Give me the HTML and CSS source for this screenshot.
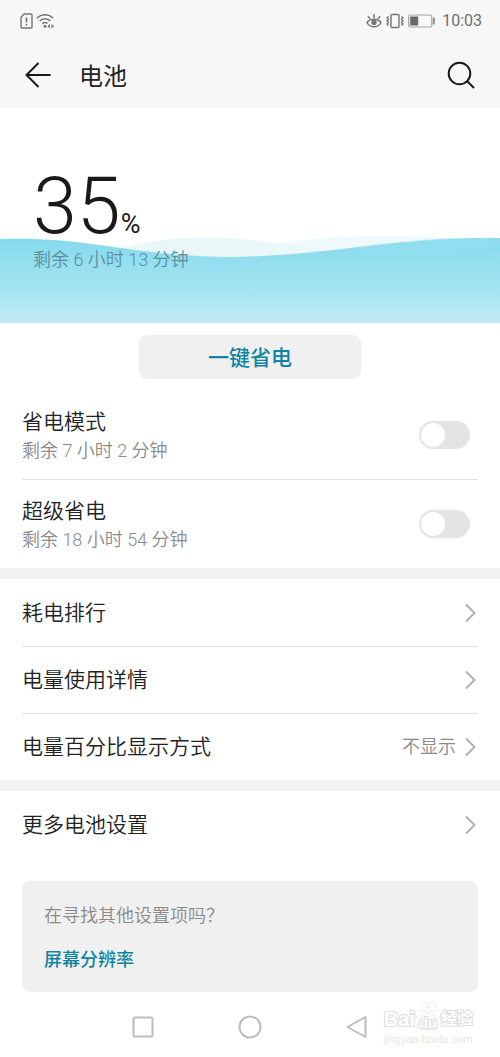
FILE: index.html
```html
<!DOCTYPE html>
<html lang="zh-CN">
<head>
<meta charset="UTF-8">
<meta name="viewport" content="width=device-width, initial-scale=1.0">
<title>电池</title>
<link rel="stylesheet" href="styles.css">
</head>
<body>
<header class="header">
  <div class="status-bar">
    <div class="status-group">
      <svg width="13" height="16" viewBox="0 0 13 16" fill="none" stroke="#757575" stroke-width="1.4">
        <path d="M4.2 1H11a1 1 0 0 1 1 1v12a1 1 0 0 1-1 1H2a1 1 0 0 1-1-1V4.2z"/>
        <path d="M6.5 4.5v4.8M6.5 10.8v1.7" stroke-width="1.6"/>
      </svg>
      <svg width="18" height="16" viewBox="0 0 18 16" fill="none" stroke="#757575" stroke-width="1.5">
        <path d="M1 5.2C5.5.6 12.5.6 17 5.2M3.6 8.1c3-3.1 7.8-3.1 10.8 0M6.2 10.8c1.6-1.5 3.6-1.6 5.4-.3"/>
        <circle cx="9" cy="13.3" r="1.5" fill="#757575" stroke="none"/>
        <path d="M11.5 13.3l2.5-2.2v4.4zM18 13.3l-2.500-2.200v4.400z" fill="#757575" stroke="none"/>
      </svg>
    </div>
    <div class="status-group">
      <svg width="16" height="16" viewBox="0 0 16 16" fill="none" stroke="#757575" stroke-width="1.5">
        <path d="M1 9.5C4 5 12 5 15 9.5C12 15.2 4 15.2 1 9.5z"/>
        <circle cx="8" cy="9.5" r="2.7" fill="#757575" stroke="none"/>
        <path d="M8 1v4M1.8 3.2l2.4 2.5M14.2 3.2l-2.4 2.5"/>
      </svg>
      <svg width="20" height="16" viewBox="0 0 20 16" fill="none" stroke="#757575" stroke-width="1.4">
        <rect x="6" y="1.5" width="8" height="13" rx="1"/>
        <path d="M3.5 3.5l-1.5 1.5 1.5 1.5-1.5 1.5 1.5 1.5-1.5 1.5 1.5 1.5M16.5 3.5l1.5 1.5-1.5 1.5 1.5 1.5-1.5 1.5 1.5 1.5-1.5 1.5"/>
      </svg>
      <svg width="27" height="14" viewBox="0 0 27 14" fill="none">
        <rect x=".7" y="1" width="23" height="12" rx="1.5" stroke="#a6a6a6" stroke-width="1.2"/>
        <rect x="2.2" y="2.5" width="8" height="9" fill="#6a6a6a"/>
        <rect x="24.8" y="3.5" width="2" height="7" fill="#8a8a8a"/>
      </svg>
      <span class="clock">10:03</span>
    </div>
  </div>
  <div class="title-bar">
    <button class="icon-button" type="button" aria-label="返回">
      <svg width="28" height="28" viewBox="0 0 28 28" fill="none" stroke="#1a1a1a" stroke-width="2">
        <path d="M14.5 2L2.5 14l12 12M2.5 14H26.5"/>
      </svg>
    </button>
    <h1>电池</h1>
    <button class="icon-button" type="button" aria-label="搜索">
      <svg width="28" height="28" viewBox="0 0 28 28" fill="none" stroke="#1a1a1a" stroke-width="2">
        <circle cx="12.5" cy="12.5" r="10.8"/>
        <path d="M20 20l7 7"/>
      </svg>
    </button>
  </div>
</header>

<main>
  <section class="hero">
    <svg class="wave" viewBox="0 0 500 88" preserveAspectRatio="none">
      <defs>
        <linearGradient id="water" x1="0" y1="0" x2="0" y2="1">
          <stop offset="0" stop-color="#85d9ed"/>
          <stop offset=".25" stop-color="#92deef"/>
          <stop offset=".65" stop-color="#a7e5f2"/>
          <stop offset="1" stop-color="#c0eaf2"/>
        </linearGradient>
      </defs>
      <path d="M120 14C160 3 200-1 250 5C290 10 320 16 340 20L280 24H160z" fill="#e9f7f8"/>
      <path d="M215 18C270 8 320 2 370 1C420 0 450 4 480 8L340 24H215z" fill="#eaf8fa" fill-opacity=".8"/>
      <path d="M0 4C70 2 110 13 160 18C200 22 230 23 262 21C340 17 410 2 500 3V88H0z" fill="url(#water)"/>
      <path d="M345 14C395 7 440 2 500 3V11C430 23 380 22 345 14z" fill="#95dff0" fill-opacity=".6"/>
    </svg>
    <div class="level">
      <span class="level-value">35</span><span class="level-unit">%</span>
    </div>
    <p class="level-time">剩余 6 小时 13 分钟</p>
  </section>

  <div class="save">
    <button class="save-button" type="button">一键省电</button>
  </div>

  <section class="group">
    <div class="row mode">
      <label for="power-saving">
        <span class="name">省电模式</span>
        <span class="note">剩余 7 小时 2 分钟</span>
      </label>
      <input class="switch" type="checkbox" id="power-saving">
    </div>
    <div class="row mode">
      <label for="ultra-saving">
        <span class="name">超级省电</span>
        <span class="note">剩余 18 小时 54 分钟</span>
      </label>
      <input class="switch" type="checkbox" id="ultra-saving">
    </div>
  </section>

  <section class="group">
    <a class="row" href="#ranking">
      <span class="name">耗电排行</span>
      <svg class="chevron" width="12" height="20" viewBox="0 0 12 20"><path d="M2 1.5l8.5 8.5L2 18.5"/></svg>
    </a>
    <a class="row" href="#usage">
      <span class="name">电量使用详情</span>
      <svg class="chevron" width="12" height="20" viewBox="0 0 12 20"><path d="M2 1.5l8.5 8.5L2 18.5"/></svg>
    </a>
    <a class="row" href="#percent">
      <span class="name">电量百分比显示方式</span>
      <span class="note">不显示</span>
      <svg class="chevron" width="12" height="20" viewBox="0 0 12 20"><path d="M2 1.5l8.5 8.5L2 18.5"/></svg>
    </a>
  </section>

  <section class="group">
    <a class="row" href="#more">
      <span class="name">更多电池设置</span>
      <svg class="chevron" width="12" height="20" viewBox="0 0 12 20"><path d="M2 1.5l8.5 8.5L2 18.5"/></svg>
    </a>
  </section>

  <aside class="related">
    <p>在寻找其他设置项吗？</p>
    <a href="#resolution">屏幕分辨率</a>
  </aside>
</main>

<nav class="nav">
  <button class="icon-button" type="button" aria-label="最近任务">
    <svg width="24" height="24" viewBox="0 0 24 24"><rect x="2.5" y="2.5" width="19" height="19" rx="1"/></svg>
  </button>
  <button class="icon-button" type="button" aria-label="主页">
    <svg width="24" height="24" viewBox="0 0 24 24"><circle cx="12" cy="12" r="10.5"/></svg>
  </button>
  <button class="icon-button" type="button" aria-label="后退">
    <svg width="24" height="24" viewBox="0 0 24 24"><path d="M20.5 2v20L2.5 12z" stroke-linejoin="round"/></svg>
  </button>
  <div class="watermark">
    <div class="brand">
      <span>Bai</span>
      <span class="paw">
        <svg width="26" height="29" viewBox="0 0 26 29">
          <path d="M13 11c-4 0-4.5 4-8 7-4 4-2 10 3 10 2 0 3-.7 5-.7s3 .7 5 .7c5 0 7-6 3-10-3.5-3-4-7-8-7z"/>
          <ellipse cx="3.8" cy="12" rx="3" ry="4"/>
          <ellipse cx="9.3" cy="5" rx="3.2" ry="4.3"/>
          <ellipse cx="17" cy="5" rx="3.2" ry="4.3"/>
          <ellipse cx="22.3" cy="12" rx="3" ry="4"/>
        </svg>
        <span class="du">du</span>
      </span>
      <span class="cn">经验</span>
    </div>
    <div class="site">jingyan.baidu.com</div>
  </div>
</nav>
</body>
</html>
```

FILE: styles.css
```css
* {
  box-sizing: border-box;
}

body {
  margin: 0;
  font-family: Roboto, "Noto Sans CJK SC", sans-serif;
  background-color: #fff;
  color: #222;
}

h1,
p {
  margin: 0;
}

a {
  color: inherit;
  text-decoration: none;
}

svg {
  display: block;
}

.header {
  background-color: #f7f7f7;
}

.status-bar {
  display: flex;
  justify-content: space-between;
  align-items: center;
  height: 42px;
  padding: 0 18px 0 20px;
}

.status-group {
  display: flex;
  align-items: center;
  gap: 3px;
}

.clock {
  margin-left: 4px;
  font-size: 16px;
  line-height: 20px;
  color: #6f6f6f;
}

.title-bar {
  display: flex;
  align-items: center;
  height: 66px;
  padding: 0 25px 0 24px;
}

.title-bar h1 {
  flex: 1;
  margin-left: 27px;
  padding-top: 4px;
  font-size: 24px;
  line-height: 32px;
  font-weight: 400;
}

.icon-button {
  padding: 0;
  border: none;
  background: none;
  cursor: pointer;
}

/* battery level */
.hero {
  position: relative;
  height: 215px;
  padding: 58px 33px 0;
}

.wave {
  position: absolute;
  left: 0;
  bottom: 0;
  width: 100%;
  height: 88px;
}

.level,
.level-time {
  position: relative;
}

.level {
  display: flex;
  align-items: baseline;
  color: #1a1a1a;
}

.level-value {
  font-size: 79px;
  line-height: 80px;
  font-weight: 300;
}

.level-unit {
  font-size: 27px;
  line-height: 32px;
}

.level-time {
  font-size: 18px;
  line-height: 28px;
  font-weight: 350;
  color: #5c8f9d;
}

.save {
  padding: 12px 0 11px;
  text-align: center;
}

.save-button {
  width: 222px;
  height: 44px;
  padding: 2px 0 0;
  border: none;
  border-radius: 8px;
  background-color: #f0f0f0;
  font: 500 21px/28px Roboto, "Noto Sans CJK SC", sans-serif;
  color: #0f84a0;
  cursor: pointer;
}

/* settings list */
.group {
  padding: 0 22px;
}

.group + .group {
  border-top: 11px solid #f2f2f2;
}

.row {
  display: flex;
  align-items: center;
  height: 67px;
  padding-right: 2px;
}

.row + .row {
  border-top: 1px solid #e0e0e0;
}

.mode {
  height: 89px;
  padding-right: 8px;
}

.mode label {
  flex: 1;
  padding-top: 2px;
}

.name {
  display: block;
  flex: 1;
  font-size: 21px;
  line-height: 30px;
  font-weight: 350;
}

.note {
  display: block;
  font-size: 18px;
  line-height: 28px;
  font-weight: 350;
  color: #8a8a8a;
}

.chevron {
  margin-left: 8px;
  fill: none;
  stroke: #b0b0b0;
  stroke-width: 2;
}

.switch {
  appearance: none;
  width: 51px;
  height: 28px;
  margin: 0;
  padding: 2px;
  border-radius: 14px;
  background-color: #e4e4e4;
  cursor: pointer;
}

.switch::before {
  content: "";
  display: block;
  width: 24px;
  height: 24px;
  border-radius: 50%;
  background-color: #fff;
}

.switch:checked {
  background-color: #0f84a0;
}

.switch:checked::before {
  margin-left: auto;
}

.related {
  margin: 23px 22px 0;
  padding: 21px 22px 18px;
  border-radius: 8px;
  background-color: #f0f0f0;
  font-size: 18px;
  line-height: 28px;
}

.related p {
  margin-bottom: 16px;
  font-weight: 350;
  color: #8a8a8a;
}

.related a {
  display: block;
  font-weight: 500;
  color: #0f84a0;
}

/* system navigation */
.nav {
  position: relative;
  display: flex;
  justify-content: center;
  gap: 83px;
  padding: 23px 0 18px;
}

.nav .icon-button svg {
  fill: none;
  stroke: #bdbdbd;
  stroke-width: 2;
}

.watermark {
  position: absolute;
  top: 10px;
  right: 27px;
  color: #fff;
  -webkit-text-stroke: 2px #dedede;
  paint-order: stroke fill;
}

.brand {
  display: flex;
  align-items: flex-end;
  font: 700 20px/24px "Liberation Sans", "Noto Sans CJK SC", sans-serif;
}

.paw {
  position: relative;
}

.paw svg {
  fill: #fff;
  stroke: #dedede;
}

.du {
  position: absolute;
  left: 0;
  right: 0;
  bottom: 0;
  font-size: 14px;
  line-height: 16px;
  text-align: center;
}

.cn {
  font-size: 16px;
}

.site {
  font: 11px/16px "Liberation Sans", sans-serif;
  color: #e6e6e6;
  -webkit-text-stroke: 0;
}
```
